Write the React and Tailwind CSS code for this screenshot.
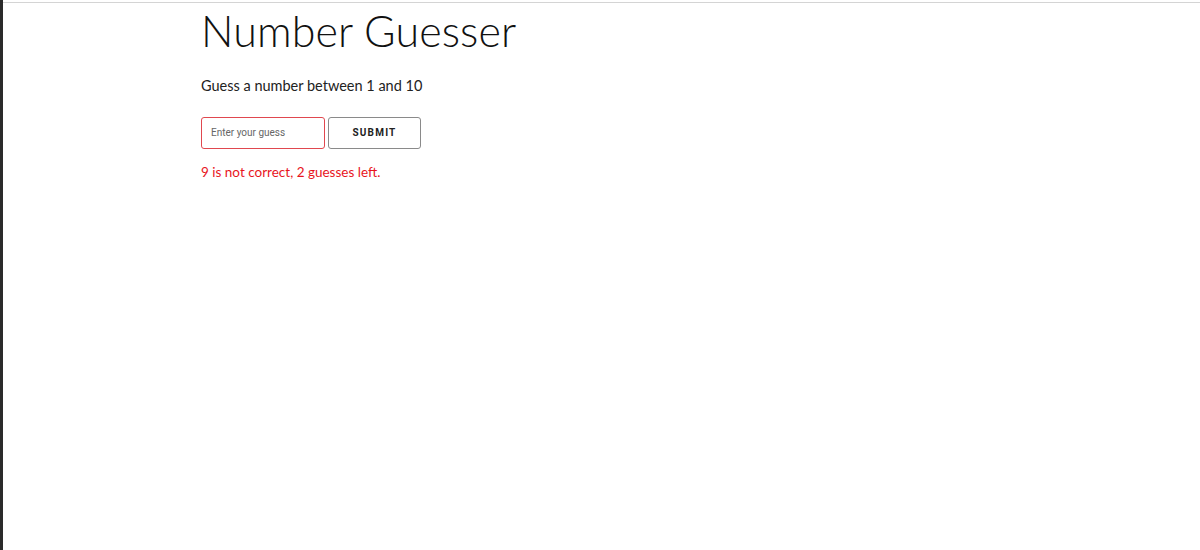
import { useState } from 'react';

export default function App() {
  const [guess, setGuess] = useState('');

  return (
    <div className="flex h-[550px] w-[1200px] bg-white font-['Lato','Open_Sans',sans-serif]">
      {/* dark window edge on the left */}
      <div className="w-[3px] bg-[#2a2a2a]" />
      <div className="flex-1 flex flex-col">
        <div className="mt-[2px] h-[1px] bg-[#d4d4d4]" />
        <main className="pl-[198px] pt-[1px]">
          <h1 className="text-[43px] font-light leading-[54px] text-[#111] tracking-[0.1px]">
            Number Guesser
          </h1>
          <p className="mt-[17px] text-[14.5px] text-[#222]">Guess a number between 1 and 10</p>
          <form className="mt-[20px] flex gap-[3px]" onSubmit={(e) => e.preventDefault()}>
            <input
              type="text"
              value={guess}
              onChange={(e) => setGuess(e.target.value)}
              placeholder="Enter your guess"
              className="h-[32px] w-[124px] rounded-[3px] border border-[#e0484f] px-[9px] text-[10px] font-['Roboto',sans-serif] text-[#333] placeholder:text-[#666] outline-none"
            />
            <button
              type="submit"
              className="h-[32px] w-[93px] rounded-[3px] border border-[#8a8a8a] bg-white text-[10px] font-bold tracking-[1.2px] text-[#222] font-['Roboto',sans-serif]"
            >
              SUBMIT
            </button>
          </form>
          <p className="mt-[13px] text-[13.5px] text-[#e8141c]">9 is not correct, 2 guesses left.</p>
        </main>
      </div>
    </div>
  );
}
